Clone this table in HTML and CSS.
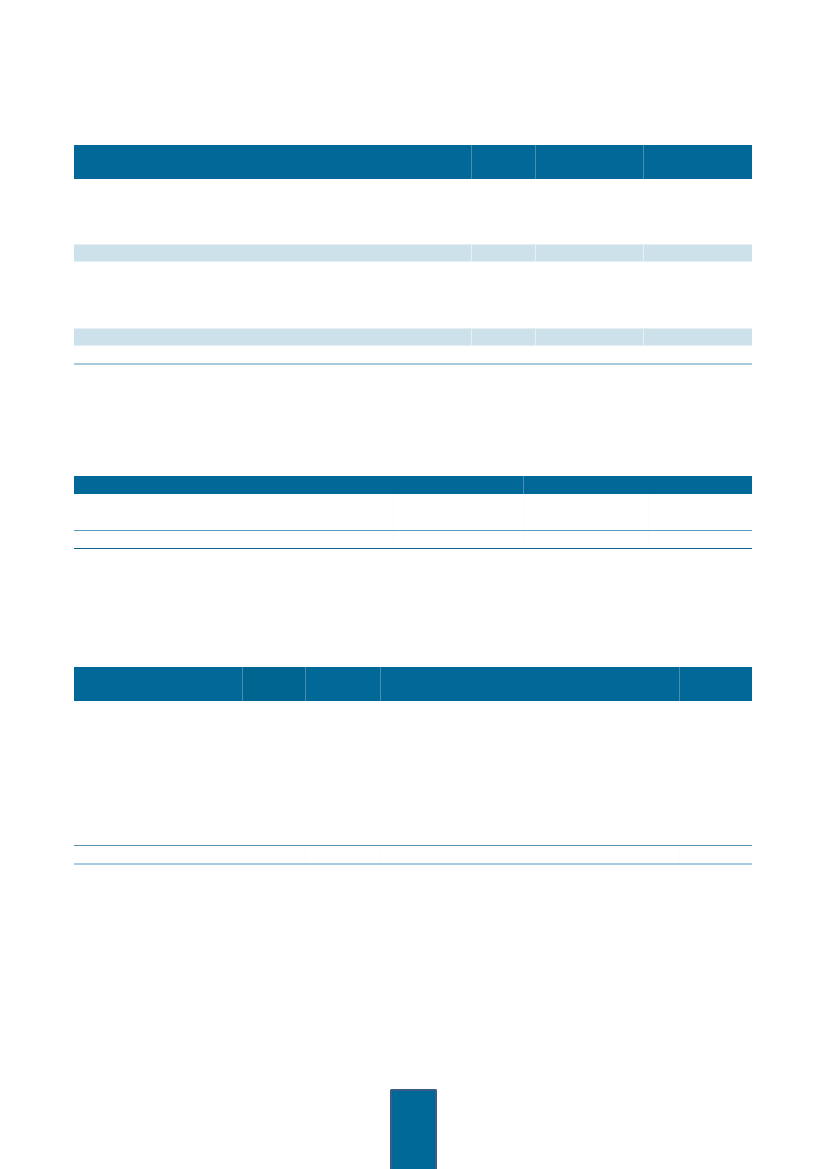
FILE: index.html
```html
<!DOCTYPE html>
<html lang="en">
<head>
<meta charset="utf-8">
<title>Tables</title>
<link rel="stylesheet" href="styles.css">
</head>
<body>
<div class="page">
  <table class="tbl tbl-one">
    <colgroup><col class="c398"><col class="c64"><col class="c108"><col class="c108"></colgroup>
    <tr class="head h34"><td class="div"></td><td class="div"></td><td class="div"></td><td></td></tr>
    <tr class="plain h65"><td></td><td></td><td></td><td></td></tr>
    <tr class="shade"><td class="div"></td><td class="div"></td><td class="div"></td><td></td></tr>
    <tr class="plain h66"><td></td><td></td><td></td><td></td></tr>
    <tr class="shade"><td class="div"></td><td class="div"></td><td class="div"></td><td></td></tr>
    <tr class="plain last"><td></td><td></td><td></td><td></td></tr>
  </table>

  <table class="tbl tbl-two">
    <colgroup><col class="c320"><col class="c130"><col class="c125"><col class="c103"></colgroup>
    <tr class="head h18"><td colspan="2" class="div"></td><td colspan="2"></td></tr>
    <tr class="rule-mid"><td class="fdiv"></td><td class="fdiv"></td><td class="fdiv"></td><td></td></tr>
    <tr class="rule-dark"><td class="fdiv"></td><td class="fdiv"></td><td class="fdiv"></td><td></td></tr>
  </table>

  <table class="tbl tbl-three">
    <colgroup><col class="c169"><col class="c63"><col class="c75"><col class="c299"><col class="c72"></colgroup>
    <tr class="head h34"><td class="div"></td><td class="div deep"></td><td class="div"></td><td class="div"></td><td></td></tr>
    <tr class="body-tall"><td></td><td></td><td></td><td></td><td></td></tr>
    <tr class="rule-light"><td class="fdiv"></td><td class="fdiv"></td><td class="fdiv"></td><td class="fdiv"></td><td></td></tr>
  </table>
</div>
<div class="tab"></div>
</body>
</html>
```

FILE: styles.css
```css
html, body {
  margin: 0;
  padding: 0;
  background: #ffffff;
  overflow: hidden;
  height: 1169px;
  font-family: "Liberation Sans", Arial, sans-serif;
}

.page {
  width: 678px;
  margin-left: 74px;
  padding-top: 145px;
}

.tbl {
  border-collapse: separate;
  border-spacing: 0;
  table-layout: fixed;
  width: 678px;
}

.tbl td {
  padding: 0;
  font-size: 0;
  line-height: 0;
}

.c398 { width: 398px; }
.c64 { width: 64px; }
.c108 { width: 108px; }
.c320 { width: 320px; }
.c130 { width: 130px; }
.c125 { width: 125px; }
.c103 { width: 103px; }
.c169 { width: 169px; }
.c63 { width: 63px; }
.c75 { width: 75px; }
.c299 { width: 299px; }
.c72 { width: 72px; }

/* header band */
.head td {
  background: #026897;
}
.head td.div {
  box-shadow: inset -1px 0 0 #4a8db1;
}
.head td.deep {
  background: #016592;
}
.h34 td { height: 34px; }
.h18 td { height: 18px; }
.h65 td { height: 65px; }
.h66 td { height: 66px; }

/* shaded rows of the first table */
.shade td {
  height: 18px;
  background: #cde1ea;
  box-shadow: inset 0 1px 0 #e4eff4, inset 0 -1px 0 #e4eff4;
}
.shade td.div {
  box-shadow: inset 0 1px 0 #e4eff4, inset 0 -1px 0 #e4eff4, inset -1px 0 0 #e6f0f5;
}

.plain.last td {
  height: 19px;
  box-shadow: inset 0 -2px 0 #a7c9da;
}

/* second table */
.tbl-two {
  margin-top: 111px;
}
.rule-mid td {
  height: 37px;
  box-shadow: inset 0 -1px 0 #5b9bbd;
}
.rule-mid td.fdiv {
  box-shadow: inset 0 -1px 0 #5b9bbd, inset -1px 0 0 #fafcfd;
}
.rule-dark td {
  height: 18px;
  box-shadow: inset 0 -1px 0 #0d6292;
}
.rule-dark td.fdiv {
  box-shadow: inset 0 -1px 0 #0d6292, inset -1px 0 0 #fafcfd;
}

/* third table */
.tbl-three {
  margin-top: 118px;
}
.body-tall td {
  height: 145px;
  box-shadow: inset 0 -1px 0 #5e91ae;
}
.rule-light td {
  height: 19px;
  box-shadow: inset 0 -2px 0 #a9cde0;
}
.rule-light td.fdiv {
  box-shadow: inset 0 -2px 0 #a9cde0, inset -1px 0 0 #fafcfd;
}

/* page tab at the foot */
.tab {
  width: 43px;
  height: 90px;
  margin-top: 224px;
  margin-left: 390px;
  background: #006896;
  border: 2px solid #3c5d8b;
  border-bottom: none;
  border-radius: 2px 2px 0 0;
}
```
